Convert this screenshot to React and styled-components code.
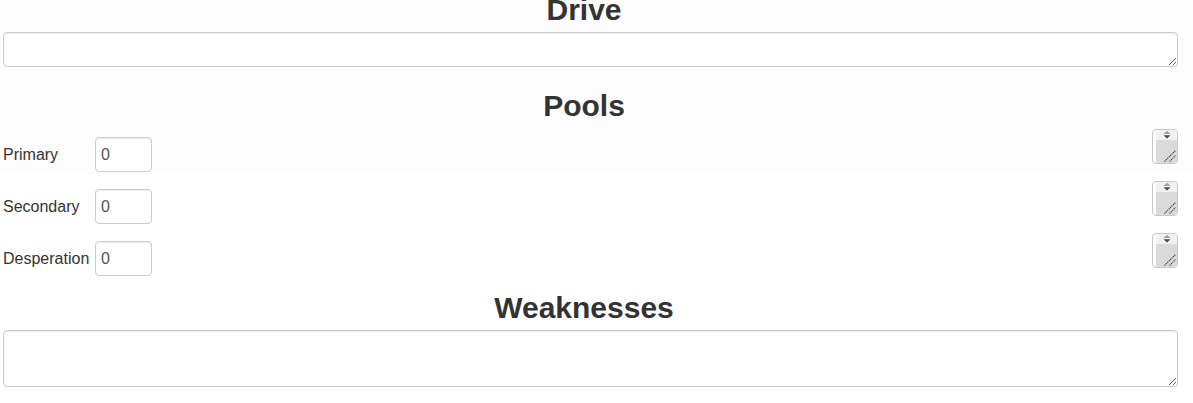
import React from "react";
import styled, { createGlobalStyle } from "styled-components";

const Global = createGlobalStyle`
  html {
    background: linear-gradient(#fdfdfd 0, #fdfdfd 174px, #ffffff 174px) no-repeat;
    background-color: #ffffff;
  }
  body {
    margin: 0;
    font-family: "Liberation Sans", Arial, Helvetica, sans-serif;
    font-size: 16px;
    line-height: 1.42857;
    color: #333333;
    overflow: hidden;
  }
  * { box-sizing: border-box; }
`;

const Page = styled.div`
  margin-top: -7px;
  padding: 0 15px 0 3px;
`;

const Heading = styled.h2`
  margin: ${(p) => p.$top || 0}px 0 6px;
  padding-right: 13px;
  font-size: 30px;
  font-weight: 700;
  line-height: 1.1;
  text-align: center;
  color: #333333;
`;

const PoolsHeading = styled(Heading)`
  margin-bottom: 0;
`;

const TextArea = styled.textarea`
  display: block;
  width: 100%;
  height: ${(p) => p.$h}px;
  padding: 6px 12px;
  border: 1px solid #cccccc;
  border-radius: 4px;
  background: #ffffff;
  box-shadow: inset 0 1px 1px rgba(0, 0, 0, 0.075);
  font-family: inherit;
  font-size: 16px;
  color: #555555;
  resize: vertical;
  outline: none;
`;

const Row = styled.div`
  display: flex;
  align-items: flex-start;
  height: 52px;
  padding-top: 7px;
`;

const Field = styled.div`
  display: flex;
  align-items: center;
  margin-top: 8px;
`;

const Label = styled.label`
  width: 92px;
  padding-top: 1px;
  font-size: 16px;
  line-height: 1.42857;
  color: #333333;
  white-space: nowrap;
`;

const NumberInput = styled.input`
  width: 57px;
  height: 35px;
  padding: 0 5px;
  border: 1px solid #cccccc;
  border-radius: 4px;
  background: #ffffff;
  box-shadow: inset 0 1px 1px rgba(0, 0, 0, 0.075);
  font-family: inherit;
  font-size: 16px;
  color: #555555;
  outline: none;
`;

const Notes = styled.div`
  margin-left: auto;
  display: flex;
  width: 26px;
  height: 35px;
  border: 1px solid #c8c8c8;
  border-radius: 4px;
  background: #ffffff;
  overflow: hidden;
`;

const NotesText = styled.div`
  width: 3px;
  flex: none;
`;

const Track = styled.svg`
  display: block;
  flex: none;
`;

function NotesBox() {
  return (
    <Notes>
      <NotesText />
      <Track width="21" height="33" viewBox="0 0 21 33">
        <rect x="0" y="0" width="21" height="10" fill="#f1f1f1" />
        <rect x="0" y="10" width="21" height="23" fill="#dadada" />
        <polygon points="7.5,4 14.5,4 11,0.8" fill="#a0a0a0" />
        <polygon points="7.5,5.2 14.5,5.2 11,8.6" fill="#4a4a4a" />
        <line x1="8.5" y1="31.5" x2="19.5" y2="20.5" stroke="#3c3c3c" strokeWidth="1.1" strokeDasharray="1.2 0.8" />
        <line x1="13.5" y1="31.5" x2="19.5" y2="25.5" stroke="#3c3c3c" strokeWidth="1.1" strokeDasharray="1.2 0.8" />
      </Track>
    </Notes>
  );
}

const Spacer = styled.div`
  height: ${(p) => p.$h}px;
`;

const pools = ["Primary", "Secondary", "Desperation"];

export default function App() {
  return (
    <>
      <Global />
      <Page>
        <Heading>Drive</Heading>
        <TextArea $h={35} />
        <PoolsHeading $top={22}>Pools</PoolsHeading>
        {pools.map((name) => (
          <Row key={name}>
            <Field>
              <Label>{name}</Label>
              <NumberInput type="text" defaultValue="0" />
            </Field>
            <NotesBox />
          </Row>
        ))}
        <Heading $top={13}>Weaknesses</Heading>
        <TextArea $h={57} />
        <Spacer $h={20} />
      </Page>
    </>
  );
}
